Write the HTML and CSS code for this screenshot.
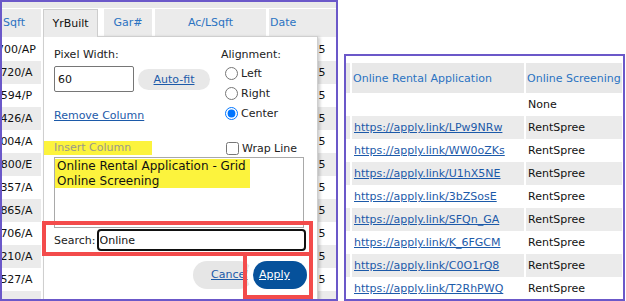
FILE: index.html
```html
<!DOCTYPE html>
<html lang="en">
<head>
    <meta charset="UTF-8">
    <title>Column settings</title>
    <link rel="stylesheet" href="styles.css">
</head>
<body>
<div class="screen">
    <div class="grid-frame">
        <div class="grid-band"></div>
        <div class="grid-track">
            <div class="grid-row grid-head">
                <div class="cell c1">Sqft</div>
                <div class="cell c2 tab">YrBuilt</div>
                <div class="cell c3">Gar#</div>
                <div class="cell c4">Ac/LSqft</div>
                <div class="cell c5">Date</div>
            </div>
            <!-- middle columns sit under the menu, left empty here -->
            <div class="grid-row"><div class="cell c1">700/AP</div><div class="cell c2"></div><div class="cell c3"></div><div class="cell c4"></div><div class="cell c5">4/15/2015</div></div>
            <div class="grid-row"><div class="cell c1">720/A</div><div class="cell c2"></div><div class="cell c3"></div><div class="cell c4"></div><div class="cell c5">4/17/2015</div></div>
            <div class="grid-row"><div class="cell c1">594/P</div><div class="cell c2"></div><div class="cell c3"></div><div class="cell c4"></div><div class="cell c5">4/21/2015</div></div>
            <div class="grid-row"><div class="cell c1">426/A</div><div class="cell c2"></div><div class="cell c3"></div><div class="cell c4"></div><div class="cell c5">4/22/2015</div></div>
            <div class="grid-row"><div class="cell c1">004/A</div><div class="cell c2"></div><div class="cell c3"></div><div class="cell c4"></div><div class="cell c5">4/24/2015</div></div>
            <div class="grid-row"><div class="cell c1">800/E</div><div class="cell c2"></div><div class="cell c3"></div><div class="cell c4"></div><div class="cell c5">4/27/2015</div></div>
            <div class="grid-row"><div class="cell c1">357/A</div><div class="cell c2"></div><div class="cell c3"></div><div class="cell c4"></div><div class="cell c5">4/28/2015</div></div>
            <div class="grid-row"><div class="cell c1">865/A</div><div class="cell c2"></div><div class="cell c3"></div><div class="cell c4"></div><div class="cell c5">4/29/2015</div></div>
            <div class="grid-row"><div class="cell c1">706/A</div><div class="cell c2"></div><div class="cell c3"></div><div class="cell c4"></div><div class="cell c5">5/01/2015</div></div>
            <div class="grid-row"><div class="cell c1">210/A</div><div class="cell c2"></div><div class="cell c3"></div><div class="cell c4"></div><div class="cell c5">5/04/2015</div></div>
            <div class="grid-row"><div class="cell c1">527/A</div><div class="cell c2"></div><div class="cell c3"></div><div class="cell c4"></div><div class="cell c5">5/05/2015</div></div>
            <div class="grid-row"><div class="cell c1"></div><div class="cell c2"></div><div class="cell c3"></div><div class="cell c4"></div><div class="cell c5"></div></div>
        </div>

        <!-- column menu for YrBuilt -->
        <div class="col-menu">
            <div class="menu-top">
                <div class="menu-left">
                    <div class="menu-label">Pixel Width:</div>
                    <div class="width-row">
                        <input class="width-input" type="text" value="60">
                        <span class="autofit"><a href="#">Auto-fit</a></span>
                    </div>
                    <a class="remove-link" href="#">Remove Column</a>
                </div>
                <div class="menu-right">
                    <div class="menu-label">Alignment:</div>
                    <label class="align-opt"><input type="radio" name="align">Left</label>
                    <label class="align-opt"><input type="radio" name="align">Right</label>
                    <label class="align-opt"><input type="radio" name="align" checked>Center</label>
                </div>
            </div>
            <div class="insert-row">
                <span class="insert-label">Insert Column</span>
                <label class="wrap-opt"><input type="checkbox">Wrap Line</label>
            </div>
            <div class="col-list">
                <div class="col-found">
                    <div>Online Rental Application - Grid</div>
                    <div>Online Screening</div>
                </div>
            </div>
            <div class="search-row">
                <span>Search:</span>
                <input class="search-input" type="text" value="Online">
            </div>
            <div class="btn-row">
                <span class="btn btn-cancel"><a href="#">Cancel</a></span>
                <span class="btn btn-apply"><a href="#">Apply</a></span>
            </div>
        </div>

        <div class="mark mark-search"></div>
        <div class="mark mark-apply"></div>
    </div>

    <div class="result-frame">
        <table class="result">
            <colgroup>
                <col class="rc0">
                <col class="rc1">
                <col class="rc2">
            </colgroup>
            <thead>
            <tr><th></th><th>Online Rental Application</th><th>Online Screening</th></tr>
            </thead>
            <tbody>
            <tr><td></td><td></td><td>None</td></tr>
            <tr><td></td><td><a href="#">https://apply.link/LPw9NRw</a></td><td>RentSpree</td></tr>
            <tr><td></td><td><a href="#">https://apply.link/WW0oZKs</a></td><td>RentSpree</td></tr>
            <tr><td></td><td><a href="#">https://apply.link/U1hX5NE</a></td><td>RentSpree</td></tr>
            <tr><td></td><td><a href="#">https://apply.link/3bZSosE</a></td><td>RentSpree</td></tr>
            <tr><td></td><td><a href="#">https://apply.link/SFQn_GA</a></td><td>RentSpree</td></tr>
            <tr><td></td><td><a href="#">https://apply.link/K_6FGCM</a></td><td>RentSpree</td></tr>
            <tr><td></td><td><a href="#">https://apply.link/C0O1rQ8</a></td><td>RentSpree</td></tr>
            <tr><td></td><td><a href="#">https://apply.link/T2RhPWQ</a></td><td>RentSpree</td></tr>
            </tbody>
        </table>
    </div>
</div>
</body>
</html>
```

FILE: styles.css
```css
*{
    box-sizing: border-box;
}
body{
    margin: 0;
    background: #fff;
    font-family: "DejaVu Sans", Verdana, sans-serif;
    font-size: 11px;
    color: #111;
}
a{
    color: #1c5aa9;
}
.screen{
    display: flex;
    align-items: flex-start;
}

/* left grid */
.grid-frame{
    position: relative;
    width: 338px;
    height: 301px;
    border: 2px solid #6b58c9;
    overflow: hidden;
}
.grid-band{
    height: 6px;
    background: #e9e9e9;
    margin-bottom: 1px;
}
.grid-track{
    width: 347px;
    margin-left: -10px;
}
.grid-row{
    display: grid;
    grid-template-columns: 51px 61px 51px 114px 70px;
    height: 23px;
}
.grid-row:nth-child(odd) .cell{
    background: #ebebeb;
}
.grid-head{
    height: 27px;
    margin-bottom: 2px;
}
.cell{
    line-height: 23px;
    white-space: nowrap;
    overflow: hidden;
    text-align: center;
}
.grid-head .cell{
    line-height: 27px;
    color: #2b73c2;
    background: #e8e8e8;
}
.c1{ margin-right: 2px; }
.c2{ margin-right: 6px; }
.c3{ margin-right: 3px; }
.c4{ margin-right: 3px; }
.c5{
    text-align: right;
    padding-right: 16px;
}
.grid-head .c1{
    text-align: left;
    padding-left: 11px;
}
.grid-head .c5{
    text-align: left;
    padding-left: 1px;
}
.grid-head .tab{
    position: relative;
    z-index: 2;
    height: 28px;
    color: #111;
    background: #fff;
    border: 1px solid #cdcdcd;
    border-bottom: none;
}

/* column menu */
.col-menu{
    position: absolute;
    left: 41px;
    top: 34px;
    z-index: 1;
    width: 275px;
    height: 290px;
    padding: 11px 10px 0 10px;
    background: #fff;
    border: 1px solid #cfcfcf;
    box-shadow: 2px 1px 3px rgba(0,0,0,.2);
    color: #222;
}
.menu-top{
    display: flex;
}
.menu-left{
    width: 167px;
}
.menu-label{
    line-height: 14px;
}
.width-row{
    display: flex;
    align-items: center;
    gap: 4px;
    margin-top: 4px;
}
.width-input{
    width: 80px;
    height: 26px;
    margin: 0;
    padding: 0 3px;
    border: 1px solid #767676;
    border-radius: 2px;
    font: 11px "DejaVu Sans", Verdana, sans-serif;
    color: #111;
}
.autofit{
    width: 72px;
    height: 21px;
    line-height: 21px;
    text-align: center;
    border-radius: 11px;
    background: #e8e8e8;
}
.remove-link{
    display: block;
    margin-top: 17px;
    line-height: 14px;
}
.align-opt{
    display: flex;
    align-items: center;
    height: 20px;
}
.menu-label + .align-opt{
    margin-top: 1px;
}
.align-opt input{
    width: 13px;
    height: 13px;
    margin: 0 3px 0 4px;
}
.insert-row{
    display: flex;
    align-items: center;
    height: 14px;
    margin: 18px 0 0 -10px;
}
.insert-label{
    width: 108px;
    line-height: 14px;
    padding-left: 10px;
    background: #fcf33d;
    color: #9a9a8a;
}
.wrap-opt{
    display: flex;
    align-items: center;
    margin-left: 73px;
}
.wrap-opt input{
    width: 13px;
    height: 13px;
    margin: 0 3px 0 1px;
}
.col-list{
    width: 250px;
    height: 71px;
    margin-top: 2px;
    padding-top: 1px;
    border: 1px solid #a9a9a9;
    font-size: 12px;
    line-height: 14.5px;
    color: #111;
}
.col-found{
    display: inline-block;
    padding: 0 4px 0 2px;
    background: #fcf33d;
}
.search-row{
    display: flex;
    align-items: center;
    gap: 1px;
    height: 22px;
    margin-top: 1px;
}
.search-input{
    width: 209px;
    height: 22px;
    margin: 0;
    padding: 0 1px;
    border: 2px solid #111;
    border-radius: 4px;
    font: 11px "DejaVu Sans", Verdana, sans-serif;
    color: #111;
}
.btn-row{
    display: flex;
    justify-content: flex-end;
    margin-top: 10px;
}
.btn{
    height: 28px;
    line-height: 28px;
    border-radius: 14px;
}
.btn-cancel{
    width: 60px;
    padding-left: 18px;
    background: #e6e6e6;
    overflow: hidden;
    white-space: nowrap;
}
.btn-apply{
    width: 54px;
    padding-left: 6px;
    background: #06519b;
    box-shadow: 0 0 0 6px #fff;
}
.btn-apply a{
    color: #fff;
}

/* red annotation boxes */
.mark{
    position: absolute;
    z-index: 3;
    border: 4px solid #f34b4b;
}
.mark-search{
    left: 40px;
    top: 219px;
    width: 271px;
    height: 35px;
}
.mark-apply{
    left: 241px;
    top: 250px;
    width: 70px;
    height: 47px;
}

/* right result table */
.result-frame{
    width: 281px;
    height: 247px;
    margin: 54px 0 0 6px;
    padding-top: 7px;
    border: 2px solid #6b58c9;
    overflow: hidden;
}
.result{
    margin-left: -2px;
    border-collapse: separate;
    border-spacing: 2px 0;
    table-layout: fixed;
    width: 280px;
}
.rc0{ width: 4px; }
.rc1{ width: 172px; }
.rc2{ width: 96px; }
.result th{
    height: 30px;
    padding: 0 0 0 1px;
    font-weight: normal;
    text-align: left;
    color: #2b73c2;
    background: #e8e8e8;
    white-space: nowrap;
}
.result td{
    height: 23px;
    padding: 0 0 0 2px;
    white-space: nowrap;
    color: #111;
}
.result tbody tr:nth-child(even) td{
    background: #ebebeb;
}
```
